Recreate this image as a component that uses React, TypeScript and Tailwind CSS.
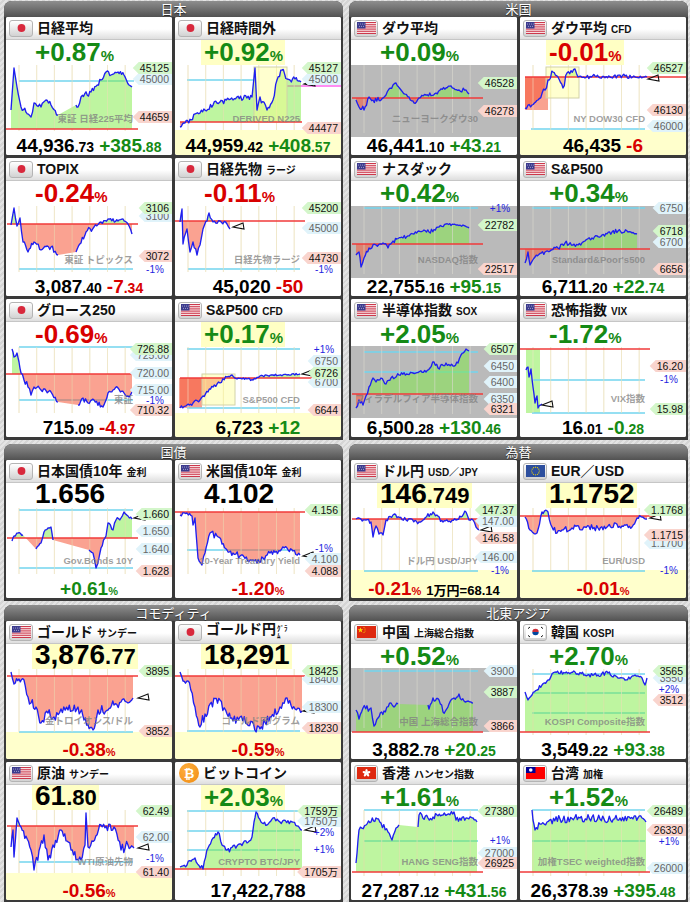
import React from 'react';

type P = [number, number, number?, number?];
type TagK = 'hi' | 'lo' | 'ref';
interface Chart {
  seed: number;
  pts: P[];
  base: number;
  bx?: [number, number];
  gray?: [number, number];
  h?: [number, number, number, string?][];
  tags?: [number, string, TagK][];
  pl?: [number, string][];
  wm?: [string, number, number?];
  mk?: [number, number];
  yr?: [number, number, number, number];
  rr?: [number, number, number, number, 'r' | 'g'][];
  yb?: number;
  nf?: boolean;
}
type FlagK = 'jp' | 'us' | 'eu' | 'cn' | 'kr' | 'hk' | 'tw' | 'btc';
type Top = { k: 'p'; v: string; c: 'g' | 'r'; hl?: boolean } | { k: 'b'; a: string; b?: string; hl?: boolean };
type Bottom =
  | { k: 'v'; a: string; b?: string; c: string; d?: string; col: 'g' | 'r'; y?: boolean }
  | { k: 'p'; v: string; col: 'g' | 'r'; ex?: string; y?: boolean }
  | { k: 'n'; a: string; y?: boolean };
interface CardD { id: string; f: FlagK; t: string; s?: string; top: Top; bot: Bottom; ch: Chart }

const SVGFONT = "'Liberation Sans','Noto Sans CJK JP',sans-serif";
const COL: Record<'g' | 'r', string> = { g: 'text-[#158a15]', r: 'text-[#d80000]' };

function rng(seed: number) {
  let a = seed >>> 0;
  return () => {
    a = (a + 0x6d2b79f5) >>> 0;
    let t = a;
    t = Math.imul(t ^ (t >>> 15), t | 1);
    t ^= t + Math.imul(t ^ (t >>> 7), t | 61);
    return ((t ^ (t >>> 14)) >>> 0) / 4294967296;
  };
}

function gen(ps: P[], r: () => number) {
  const out: { x: number; y: number; m: boolean }[] = [{ x: ps[0][0], y: ps[0][1], m: true }];
  for (let i = 1; i < ps.length; i++) {
    const x0 = ps[i - 1][0];
    const y0 = ps[i - 1][1];
    const x1 = ps[i][0];
    const y1 = ps[i][1];
    const n = ps[i][2] ?? 0;
    const g = ps[i][3] ?? 0;
    if (g) {
      out.push({ x: x1, y: y1, m: true });
      continue;
    }
    const steps = Math.max(1, Math.round((x1 - x0) / 1.3));
    for (let s = 1; s <= steps; s++) {
      const t = s / steps;
      let y = y0 + (y1 - y0) * t;
      if (s < steps && n) y += (r() * 2 - 1) * n;
      y = Math.max(0, Math.min(70, y));
      out.push({ x: x0 + (x1 - x0) * t, y, m: false });
    }
  }
  return out;
}

const tw = (s: string) => [...s].reduce((a, ch) => a + (ch === '.' ? 2.9 : ch === '万' ? 10.5 : 5.85), 0);

function ChartSvg({ c, id }: { c: Chart; id: string }) {
  const W = 166;
  const H = 72;
  const pts = gen(c.pts, rng(c.seed));
  const bx = c.bx ?? [1, 132];
  let line = '';
  pts.forEach((p, i) => {
    line += `${i === 0 || p.m ? 'M' : 'L'}${p.x.toFixed(1)} ${p.y.toFixed(1)} `;
  });
  const f = pts[0];
  const l = pts[pts.length - 1];
  const area =
    `M${f.x} ${c.base} ` + pts.map((p) => `L${p.x.toFixed(1)} ${p.y.toFixed(1)}`).join(' ') + ` L${l.x} ${c.base} Z`;
  const grid = [0, 1, 2, 3, 4, 5, 6].map((i) => 13 + i * 17.7);
  const gy1 = c.yb ?? 66;
  const tags = [...(c.tags ?? [])].sort((a, b) => (a[2] === 'ref' ? 0 : 1) - (b[2] === 'ref' ? 0 : 1));
  const tagFill: Record<TagK, string> = { hi: '#d3f6ca', lo: '#f9d4cd', ref: '#e0f3fa' };
  return (
    <svg width={W} height={H} viewBox={`0 0 ${W} ${H}`} className="block overflow-visible">
      <defs>
        <clipPath id={`${id}u`}>
          <rect x="0" y="-20" width={W} height={c.base + 20} />
        </clipPath>
        <clipPath id={`${id}d`}>
          <rect x="0" y={c.base} width={W} height={H + 20} />
        </clipPath>
      </defs>
      {c.yb !== undefined && <rect x="0" y={c.yb} width={W} height={H - c.yb} fill="#ffffcc" />}
      {c.gray && <rect x="0" y={c.gray[0]} width={W} height={c.gray[1] - c.gray[0]} fill="#bababa" />}
      {!c.gray &&
        grid.map((x) => <line key={`g${x}`} x1={x} x2={x} y1={0} y2={gy1} stroke="#f0e9cf" strokeWidth="1" />)}
      {c.rr?.map((r, i) => (
        <rect key={`r${i}`} x={r[0]} y={r[1]} width={r[2]} height={r[3]} fill={r[4] === 'r' ? '#f9a291' : '#bef5a0'} />
      ))}
      {c.h?.map(([y, x0, x1, col], i) => (
        <line key={`h${i}`} x1={x0} x2={x1} y1={y} y2={y} stroke={col ?? '#72d4ee'} strokeWidth="1.5" />
      ))}
      {!c.nf && (
        <>
          <path d={area} fill="rgba(125,235,65,0.5)" clipPath={`url(#${id}u)`} />
          <path d={area} fill="rgba(245,85,55,0.55)" clipPath={`url(#${id}d)`} />
        </>
      )}
      {grid.map((x) => (
        <line
          key={`v${x}`}
          x1={x}
          x2={x}
          y1={c.gray ? c.gray[0] : 0}
          y2={c.gray ? c.gray[1] - 4 : gy1}
          stroke={c.gray ? '#dcdad0' : '#f0e8c8'}
          strokeOpacity={c.gray ? 0.6 : 0.55}
          strokeWidth="1"
        />
      ))}
      {c.yr && (
        <rect
          x={c.yr[0]}
          y={c.yr[1]}
          width={c.yr[2]}
          height={c.yr[3]}
          fill="#ffff88"
          fillOpacity="0.4"
          stroke="#d2d2a8"
          strokeWidth="1"
        />
      )}
      <line x1={bx[0]} x2={bx[1]} y1={c.base} y2={c.base} stroke="#f03a3a" strokeWidth="1.6" />
      <path d={line} fill="none" stroke="#1f1ff0" strokeWidth="1.35" strokeLinejoin="round" />
      {c.wm && (
        <text
          x={c.wm[2] ?? 127}
          y={c.wm[1]}
          textAnchor="end"
          fontSize="9.5"
          fontWeight="bold"
          fontFamily={SVGFONT}
          fill="#808080"
          fillOpacity="0.75"
        >
          {c.wm[0]}
        </text>
      )}
      {c.mk && (
        <path
          d={`M${c.mk[0]} ${c.mk[1]} L${c.mk[0] + 10} ${c.mk[1] - 4} L${c.mk[0] + 11} ${c.mk[1] + 2} Z`}
          fill="none"
          stroke="#111"
          strokeWidth="1.1"
        />
      )}
      {tags.map(([y, t, k], i) => {
        const x0 = 163 - tw(t);
        const tip = x0 - 7;
        return (
          <g key={`t${i}`}>
            <path
              d={`M${tip} ${y} L${tip + 6} ${y - 6} L${W + 1} ${y - 6} L${W + 1} ${y + 6} L${tip + 6} ${y + 6} Z`}
              fill={tagFill[k]}
            />
            <text x={163} y={y + 3.8} textAnchor="end" fontSize="10.5" fontFamily={SVGFONT} fill={k === 'ref' ? '#666' : '#111'}>
              {t}
            </text>
          </g>
        );
      })}
      {c.pl?.map(([y, t], i) => (
        <text key={`p${i}`} x={149} y={y + 3.5} textAnchor="middle" fontSize="10" fontFamily={SVGFONT} fill="#2424e0">
          {t}
        </text>
      ))}
    </svg>
  );
}

function FlagArt({ k }: { k: FlagK }) {
  if (k === 'jp') return <circle cx="9.5" cy="6" r="3.9" fill="#d8283c" />;
  if (k === 'us')
    return (
      <>
        <rect width="19" height="12" fill="#ffffff" />
        {[0, 2, 4, 6, 8, 10, 12].map((i) => (
          <rect key={i} y={(i * 12) / 13} width="19" height={12 / 13} fill="#c8283c" />
        ))}
        <rect width="8.5" height="6.5" fill="#3c3b8e" />
        {[1.5, 3.5, 5.5, 7.2].map((x) => (
          <circle key={x} cx={x} cy="2" r="0.45" fill="#fff" />
        ))}
        {[2.5, 4.5, 6.5].map((x) => (
          <circle key={x} cx={x} cy="4.3" r="0.45" fill="#fff" />
        ))}
      </>
    );
  if (k === 'eu')
    return (
      <>
        <rect width="19" height="12" fill="#2d4f9e" />
        {Array.from({ length: 12 }).map((_, i) => (
          <circle
            key={i}
            cx={9.5 + 3.8 * Math.cos((i * Math.PI) / 6)}
            cy={6 + 3.8 * Math.sin((i * Math.PI) / 6)}
            r="0.6"
            fill="#f5d800"
          />
        ))}
      </>
    );
  if (k === 'cn')
    return (
      <>
        <rect width="19" height="12" fill="#de2910" />
        <polygon points="3.5,1.2 4.2,3.2 6.3,3.2 4.6,4.4 5.3,6.4 3.5,5.2 1.7,6.4 2.4,4.4 0.7,3.2 2.8,3.2" fill="#ffde00" />
        <circle cx="7" cy="1.5" r="0.5" fill="#ffde00" />
        <circle cx="8" cy="3" r="0.5" fill="#ffde00" />
        <circle cx="8" cy="5" r="0.5" fill="#ffde00" />
        <circle cx="7" cy="6.4" r="0.5" fill="#ffde00" />
      </>
    );
  if (k === 'kr')
    return (
      <>
        <rect width="19" height="12" fill="#ffffff" />
        <path d="M6.3 6 A3.2 3.2 0 0 1 12.7 6 Z" fill="#cd2e3a" />
        <path d="M6.3 6 A3.2 3.2 0 0 0 12.7 6 Z" fill="#0047a0" />
        <line x1="2" y1="2.6" x2="4" y2="1" stroke="#111" strokeWidth="1" />
        <line x1="15" y1="1" x2="17" y2="2.6" stroke="#111" strokeWidth="1" />
        <line x1="2" y1="9.4" x2="4" y2="11" stroke="#111" strokeWidth="1" />
        <line x1="15" y1="11" x2="17" y2="9.4" stroke="#111" strokeWidth="1" />
      </>
    );
  if (k === 'hk')
    return (
      <>
        <rect width="19" height="12" fill="#de2910" />
        {[0, 72, 144, 216, 288].map((a) => (
          <ellipse key={a} cx="9.5" cy="4" rx="1.2" ry="2.1" fill="#ffffff" transform={`rotate(${a} 9.5 6)`} />
        ))}
      </>
    );
  if (k === 'tw')
    return (
      <>
        <rect width="19" height="12" fill="#fe0000" />
        <rect width="9.5" height="6" fill="#000095" />
        <circle cx="4.75" cy="3" r="1.8" fill="#ffffff" />
      </>
    );
  return null;
}

function FlagBox({ k }: { k: FlagK }) {
  if (k === 'btc')
    return (
      <div className="ml-[4px] flex h-[20px] w-[20px] items-center justify-center rounded-full bg-[radial-gradient(circle_at_40%_35%,#ffb040,#f08a10)] text-[13px] leading-none font-bold text-white">
        ₿
      </div>
    );
  return (
    <div className="ml-[3px] flex h-[17px] w-[24px] items-center justify-center rounded-[3px] border border-[#b4b4b4] bg-[linear-gradient(#ffffff,#d2d2d2)]">
      <svg width="19" height="12" viewBox="0 0 19 12">
        <FlagArt k={k} />
      </svg>
    </div>
  );
}

function Card({ d }: { d: CardD }) {
  const top = d.top;
  const bot = d.bot;
  return (
    <div className="flex h-[138px] w-[166px] flex-col overflow-hidden rounded-[2px] bg-white">
      <div className="flex h-[23px] shrink-0 items-center border-b border-[#c6c6c6] bg-[linear-gradient(#ffffff_0%,#ffffff_55%,#dedede_100%)]">
        <FlagBox k={d.f} />
        <div className="ml-[4px] flex items-baseline text-[#111]">
          <span className="text-[14px] leading-none font-bold">{d.t}</span>
          {d.s === 'GRAM' ? (
            <span className="ml-[1px] flex -translate-y-[3px] flex-col text-[7px] leading-[7px] font-bold">
              <span>ｸﾞﾗ</span>
              <span>ﾑ</span>
            </span>
          ) : d.s ? (
            <span className="ml-[4px] text-[10px] leading-none font-bold">{d.s}</span>
          ) : null}
        </div>
      </div>
      <div className="flex h-[25px] shrink-0 pl-[26px]">
        <div className={`flex h-[25px] items-baseline pr-[2px] pl-[3px] ${top.hl ? 'bg-[#ffffc4]' : ''}`}>
          {top.k === 'p' ? (
            <>
              <span className={`text-[26px] leading-[25px] font-bold ${COL[top.c]}`}>{top.v}</span>
              <span className={`text-[15px] font-bold ${COL[top.c]}`}>%</span>
            </>
          ) : (
            <>
              <span className="text-[28px] leading-[22px] font-bold text-black">{top.a}</span>
              {top.b && <span className="text-[22px] leading-[22px] font-bold text-black">{top.b}</span>}
            </>
          )}
        </div>
      </div>
      <div className="h-[72px] shrink-0">
        <ChartSvg c={d.ch} id={d.id} />
      </div>
      <div
        className={`flex h-[18px] shrink-0 items-baseline justify-center leading-[18px] font-bold ${bot.y ? 'bg-[#ffffcc]' : 'bg-white'}`}
      >
        {bot.k === 'v' && (
          <>
            <span className="text-[19px] text-black">{bot.a}</span>
            {bot.b && <span className="text-[14px] text-black">{bot.b}</span>}
            <span className={`ml-[5px] text-[19px] ${COL[bot.col]}`}>{bot.c}</span>
            {bot.d && <span className={`text-[14px] ${COL[bot.col]}`}>{bot.d}</span>}
          </>
        )}
        {bot.k === 'p' && (
          <>
            <span className={`text-[19px] ${COL[bot.col]}`}>{bot.v}</span>
            <span className={`text-[11px] ${COL[bot.col]}`}>%</span>
            {bot.ex && <span className="ml-[5px] text-[13px] text-black">{bot.ex}</span>}
          </>
        )}
        {bot.k === 'n' && <span className="text-[19px] text-black">{bot.a}</span>}
      </div>
    </div>
  );
}

function Section({ title, cards }: { title: string; cards: CardD[] }) {
  return (
    <div className="w-[339px] overflow-hidden rounded-t-[8px] bg-[#3a3a3a] px-[2px] pb-[3px]">
      <div className="-mx-[2px] flex h-[16px] items-center justify-center bg-[linear-gradient(#8e8e8e,#525252)] text-[13px] leading-none text-white [text-shadow:0_1px_1px_#222]">
        {title}
      </div>
      <div className="grid grid-cols-[166px_166px] gap-[3px]">
        {cards.map((c) => (
          <Card key={c.id} d={c} />
        ))}
      </div>
    </div>
  );
}

const c1: CardD = {
  id: 'c1', f: 'jp', t: '日経平均',
  top: { k: 'p', v: '+0.87', c: 'g' },
  bot: { k: 'v', a: '44,936', b: '.73', c: '+385', d: '.88', col: 'g' },
  ch: {
    seed: 11, base: 64, bx: [0, 132],
    pts: [[5, 45], [8, 3, 2], [11, 22, 2], [15, 42, 3], [25, 52, 3], [28, 38, 3], [35, 42, 3], [40, 35, 3], [45, 40, 3], [52, 50, 3], [70, 40, 0, 1], [72, 42, 2], [75, 32, 3], [85, 27, 3], [95, 15, 3], [100, 7, 2], [105, 10, 2], [112, 7, 2], [118, 10, 2], [123, 20, 1], [126, 22, 1]],
    h: [[16, 13, 128]],
    tags: [[14, '45000', 'ref'], [3, '45125', 'hi'], [52, '44659', 'lo']],
    wm: ['東証 日経225平均', 57],
  },
};
const c2: CardD = {
  id: 'c2', f: 'jp', t: '日経時間外',
  top: { k: 'p', v: '+0.92', c: 'g', hl: true },
  bot: { k: 'v', a: '44,959', b: '.42', c: '+408', d: '.57', col: 'g', y: true },
  ch: {
    seed: 22, base: 57, bx: [5, 127], yb: 65,
    pts: [[5, 62], [10, 58, 2], [25, 48, 3], [42, 38, 3], [58, 35, 3], [77, 32, 3], [80, 3, 1], [82, 45, 1], [85, 32, 4], [92, 45, 4], [98, 35, 4], [102, 15, 3], [107, 5, 3], [112, 14, 3], [115, 15, 3], [120, 14, 3], [126, 17, 2]],
    h: [[15, 12, 80], [21, 112, 166, '#ff66ee']],
    yr: [79, 2, 33, 55],
    tags: [[14, '45000', 'ref'], [3, '45127', 'hi'], [63, '44477', 'lo']],
    mk: [129, 19], wm: ['DERIVED N225', 57, 125],
  },
};
const c3: CardD = {
  id: 'c3', f: 'us', t: 'ダウ平均',
  top: { k: 'p', v: '+0.09', c: 'g' },
  bot: { k: 'v', a: '46,441', b: '.10', c: '+43', d: '.21', col: 'g' },
  ch: {
    seed: 33, base: 33, gray: [0, 72],
    pts: [[5, 35], [8, 42, 2], [13, 45, 3], [18, 32, 3], [22, 35, 3], [32, 33, 3], [35, 30, 2], [42, 20, 2], [45, 18, 1], [50, 25, 2], [58, 32, 2], [63, 38, 2], [68, 33, 2], [75, 30, 2], [85, 28, 2], [95, 23, 2], [100, 21, 2], [108, 25, 2], [115, 25, 2], [118, 29, 1]],
    tags: [[18, '46528', 'hi'], [46, '46278', 'lo']],
    wm: ['ニューヨークダウ30', 57],
  },
};
const c4: CardD = {
  id: 'c4', f: 'us', t: 'ダウ平均', s: 'CFD',
  top: { k: 'p', v: '-0.01', c: 'r', hl: true },
  bot: { k: 'v', a: '46,435', c: '-6', col: 'r', y: true },
  ch: {
    seed: 44, base: 12, bx: [5, 167], yb: 65,
    rr: [[5, 12, 23, 33, 'r']],
    pts: [[5, 43], [12, 40, 2], [18, 35, 2], [25, 25, 3], [28, 15, 3], [33, 7, 3], [38, 12, 3], [43, 23, 3], [47, 8, 3], [55, 4, 2], [58, 12, 2], [65, 13, 2], [75, 11, 2], [90, 12, 2], [105, 11, 2], [115, 12, 2], [127, 12, 1]],
    yr: [26, 2, 33, 31],
    h: [[64, 11, 125]],
    tags: [[61, '46000', 'ref'], [3, '46527', 'hi'], [45, '46130', 'lo']],
    mk: [128, 14], wm: ['NY DOW30 CFD', 57, 125],
  },
};
const c5: CardD = {
  id: 'c5', f: 'jp', t: 'TOPIX',
  top: { k: 'p', v: '-0.24', c: 'r' },
  bot: { k: 'v', a: '3,087', b: '.40', c: '-7', d: '.34', col: 'r' },
  ch: {
    seed: 55, base: 18,
    pts: [[5, 19], [8, 2, 2], [11, 20, 2], [14, 12, 2], [17, 36, 3], [22, 46, 3], [28, 36, 3], [35, 44, 3], [45, 41, 3], [52, 49, 3], [70, 46, 0, 1], [75, 37, 2], [80, 26, 3], [88, 21, 3], [95, 16, 2], [102, 13, 2], [112, 15, 2], [117, 13, 2], [122, 18, 1], [126, 28, 1]],
    h: [[63, 13, 127]], pl: [[63, '-1%']],
    tags: [[10, '3100', 'ref'], [2, '3106', 'hi'], [50, '3072', 'lo']],
    wm: ['東証 トピックス', 57],
  },
};
const c6: CardD = {
  id: 'c6', f: 'jp', t: '日経先物', s: 'ラージ',
  top: { k: 'p', v: '-0.11', c: 'r' },
  bot: { k: 'v', a: '45,020', c: '-50', col: 'r' },
  ch: {
    seed: 66, base: 15, bx: [0, 130],
    pts: [[5, 16], [7, 3, 1], [8, 38, 1], [12, 23, 2], [15, 46, 2], [18, 36, 2], [22, 49, 2], [25, 39, 2], [28, 23, 2], [32, 15, 2], [34, 7, 1], [38, 16, 2], [45, 15, 2], [52, 18, 2], [55, 23, 1]],
    h: [[63, 13, 125]], pl: [[63, '-1%']],
    tags: [[22, '45000', 'ref'], [2, '45200', 'hi'], [52, '44730', 'lo']],
    mk: [58, 21], wm: ['日経先物ラージ', 57, 125],
  },
};
const c7: CardD = {
  id: 'c7', f: 'us', t: 'ナスダック',
  top: { k: 'p', v: '+0.42', c: 'g' },
  bot: { k: 'v', a: '22,755', b: '.16', c: '+95', d: '.15', col: 'g' },
  ch: {
    seed: 77, base: 38, gray: [0, 72],
    pts: [[5, 49], [8, 46, 2], [10, 61, 2], [13, 52, 2], [18, 42, 2], [25, 39, 2], [32, 37, 2], [37, 42, 2], [42, 35, 2], [52, 32, 2], [62, 28, 2], [68, 25, 2], [78, 26, 2], [88, 21, 2], [95, 18, 2], [105, 19, 2], [112, 19, 2], [118, 22, 1]],
    h: [[2, 13, 127]], pl: [[2, '+1%']],
    tags: [[19, '22782', 'hi'], [63, '22517', 'lo']],
    wm: ['NASDAQ指数', 57],
  },
};
const c8: CardD = {
  id: 'c8', f: 'us', t: 'S&P500',
  top: { k: 'p', v: '+0.34', c: 'g' },
  bot: { k: 'v', a: '6,711', b: '.20', c: '+22', d: '.74', col: 'g' },
  ch: {
    seed: 88, base: 43, bx: [0, 130], gray: [0, 72],
    pts: [[5, 57], [8, 46, 2], [10, 59, 2], [15, 51, 2], [25, 46, 2], [38, 42, 2], [45, 37, 2], [58, 39, 2], [65, 35, 2], [72, 32, 2], [82, 29, 2], [92, 26, 2], [98, 25, 2], [108, 26, 2], [117, 28, 1]],
    h: [[2, 12, 125]],
    tags: [[2, '6750', 'ref'], [36, '6700', 'ref'], [25, '6718', 'hi'], [63, '6656', 'lo']],
    wm: ["Standard&Poor's500", 57, 125],
  },
};
const c9: CardD = {
  id: 'c9', f: 'jp', t: 'グロース250',
  top: { k: 'p', v: '-0.69', c: 'r' },
  bot: { k: 'v', a: '715', b: '.09', c: '-4', d: '.97', col: 'r' },
  ch: {
    seed: 99, base: 27, bx: [0, 132],
    pts: [[6, 2], [8, 10, 2], [11, 6, 2], [13, 15, 2], [15, 26, 2], [18, 33, 2], [22, 40, 3], [25, 48, 3], [28, 40, 3], [35, 43, 3], [45, 45, 3], [52, 55, 3], [72, 58, 0, 1], [77, 51, 2], [82, 56, 3], [88, 53, 3], [97, 60, 3], [102, 46, 3], [107, 43, 2], [112, 41, 2], [118, 46, 2], [123, 50, 2], [126, 45, 1]],
    h: [[0, 13, 127], [53, 13, 127]], pl: [[53, '-1%']],
    tags: [[8, '725.00', 'ref'], [26, '720.00', 'ref'], [43, '715.00', 'ref'], [2, '726.88', 'hi'], [63, '710.32', 'lo']],
    wm: ['東証', 56],
  },
};
const c10: CardD = {
  id: 'c10', f: 'us', t: 'S&P500', s: 'CFD',
  top: { k: 'p', v: '+0.17', c: 'g', hl: true },
  bot: { k: 'v', a: '6,723', c: '+12', col: 'g', y: true },
  ch: {
    seed: 101, base: 31, bx: [5, 166], yb: 66,
    rr: [[4, 31, 23, 30, 'r']],
    pts: [[5, 61], [12, 58, 2], [18, 56, 2], [25, 53, 2], [28, 49, 2], [33, 45, 2], [38, 40, 2], [45, 36, 2], [52, 30, 2], [57, 28, 1], [62, 32, 1], [72, 32, 1], [78, 33, 1], [85, 29, 1], [98, 28, 1], [112, 28, 1], [125, 27, 1]],
    yr: [27, 27, 33, 31],
    h: [[2, 12, 125], [61, 12, 125]], pl: [[2, '+1%']],
    tags: [[14, '6750', 'ref'], [35, '6700', 'ref'], [26, '6726', 'hi'], [63, '6644', 'lo']],
    mk: [127, 27], wm: ['S&P500 CFD', 56, 125],
  },
};
const c11: CardD = {
  id: 'c11', f: 'us', t: '半導体指数', s: 'SOX',
  top: { k: 'p', v: '+2.05', c: 'g' },
  bot: { k: 'v', a: '6,500', b: '.28', c: '+130', d: '.46', col: 'g' },
  ch: {
    seed: 111, base: 47, gray: [-1, 71],
    pts: [[5, 61], [8, 53, 2], [12, 58, 2], [15, 49, 2], [18, 40, 2], [22, 31, 2], [25, 35, 2], [30, 31, 2], [35, 37, 2], [40, 31, 2], [48, 28, 2], [62, 26, 2], [75, 25, 2], [83, 15, 2], [87, 21, 2], [95, 16, 2], [102, 19, 2], [107, 16, 2], [110, 8, 1], [115, 2, 1], [118, 4, 1]],
    h: [[5, 13, 127], [25, 13, 127]],
    tags: [[19, '6450', 'ref'], [35, '6400', 'ref'], [52, '6350', 'ref'], [2, '6507', 'hi'], [62, '6321', 'lo']],
    wm: ['フィラデルフィア半導体指数', 55],
  },
};
const c12: CardD = {
  id: 'c12', f: 'us', t: '恐怖指数', s: 'VIX',
  top: { k: 'p', v: '-1.72', c: 'g' },
  bot: { k: 'v', a: '16', b: '.01', c: '-0', d: '.28', col: 'g' },
  ch: {
    seed: 121, base: 2, bx: [0, 130], nf: true,
    rr: [[6, 2, 14, 64, 'g']],
    pts: [[6, 23], [8, 20, 1], [9, 30, 1], [11, 22, 1], [13, 40, 2], [15, 56, 2], [17, 49, 2], [18, 61, 1], [22, 57, 1]],
    h: [[33, 13, 125], [66, 12, 125]], pl: [[32, '-1%']],
    tags: [[19, '16.20', 'lo'], [62, '15.98', 'hi']],
    mk: [22, 58], wm: ['VIX指数', 55, 125],
  },
};
const c13: CardD = {
  id: 'c13', f: 'jp', t: '日本国債10年', s: '金利',
  top: { k: 'b', a: '1.656' },
  bot: { k: 'p', v: '+0.61', col: 'g' },
  ch: {
    seed: 131, base: 30,
    pts: [[6, 33], [8, 28, 1], [12, 25, 1], [17, 27, 1], [30, 41, 0, 1], [35, 35, 1], [38, 24, 1], [42, 20, 1], [45, 19, 1], [47, 32, 1], [83, 42, 0, 1], [87, 45, 1], [90, 60, 1], [92, 55, 1], [95, 40, 1], [100, 28, 2], [102, 15, 2], [107, 22, 2], [110, 12, 2], [115, 10, 2], [118, 4, 1], [122, 8, 1], [126, 11, 1]],
    h: [[2, 13, 127], [60, 13, 127]],
    tags: [[23, '1.650', 'ref'], [41, '1.640', 'ref'], [6, '1.660', 'hi'], [63, '1.628', 'lo']],
    mk: [128, 10], wm: ['Gov.Bonds 10Y', 56],
  },
};
const c14: CardD = {
  id: 'c14', f: 'us', t: '米国債10年', s: '金利',
  top: { k: 'b', a: '4.102' },
  bot: { k: 'p', v: '-1.20', col: 'r' },
  ch: {
    seed: 141, base: 4, bx: [0, 130],
    pts: [[5, 7], [12, 5, 2], [17, 8, 2], [18, 17, 1], [20, 10, 1], [22, 37, 2], [23, 50, 2], [27, 57, 2], [30, 45, 3], [35, 25, 3], [42, 28, 3], [47, 36, 3], [52, 42, 3], [58, 45, 3], [65, 48, 3], [75, 52, 3], [82, 55, 3], [88, 50, 3], [95, 45, 3], [105, 43, 3], [112, 40, 3], [118, 43, 3], [125, 47, 2]],
    h: [[42, 12, 125]], pl: [[40, '-1%']],
    tags: [[51, '4.100', 'ref'], [2, '4.156', 'hi'], [63, '4.088', 'lo']],
    mk: [128, 48], wm: ['10-Year Treasury Yield', 56, 125],
  },
};
const c15: CardD = {
  id: 'c15', f: 'us', t: 'ドル円', s: 'USD／JPY',
  top: { k: 'b', a: '146', b: '.749', hl: true },
  bot: { k: 'p', v: '-0.21', col: 'r', ex: '1万円=68.14', y: true },
  ch: {
    seed: 151, base: 11, yb: 62,
    pts: [[5, 11], [15, 12, 2], [20, 14, 2], [22, 29, 3], [25, 18, 3], [28, 26, 3], [32, 27, 3], [35, 12, 3], [42, 7, 2], [55, 12, 2], [68, 14, 2], [82, 4, 2], [92, 14, 2], [105, 12, 2], [115, 4, 2], [118, 12, 2], [122, 12, 2], [125, 19, 2], [128, 22, 1]],
    h: [[63, 13, 127]], pl: [[62, '-1%']],
    tags: [[13, '147.00', 'ref'], [49, '146.00', 'ref'], [2, '147.37', 'hi'], [30, '146.58', 'lo']],
    mk: [130, 22], wm: ['ドル円 USD/JPY', 56],
  },
};
const c16: CardD = {
  id: 'c16', f: 'eu', t: 'EUR／USD',
  top: { k: 'b', a: '1.1752', hl: true },
  bot: { k: 'p', v: '-0.01', col: 'r', y: true },
  ch: {
    seed: 161, base: 8, bx: [0, 135], yb: 62,
    pts: [[5, 9], [10, 22, 3], [17, 25, 3], [22, 4, 2], [28, 4, 2], [32, 19, 3], [37, 25, 3], [42, 22, 3], [52, 20, 3], [65, 19, 3], [78, 20, 3], [88, 18, 3], [102, 18, 3], [112, 19, 2], [117, 10, 2], [122, 9, 2], [127, 11, 1]],
    h: [[63, 12, 125]], pl: [[62, '-1%']],
    tags: [[35, '1.1700', 'ref'], [2, '1.1768', 'hi'], [27, '1.1715', 'lo']],
    mk: [130, 10], wm: ['EUR/USD', 56, 125],
  },
};
const c17: CardD = {
  id: 'c17', f: 'us', t: 'ゴールド', s: 'サンデー',
  top: { k: 'b', a: '3,876', b: '.77', hl: true },
  bot: { k: 'p', v: '-0.38', col: 'r', y: true },
  ch: {
    seed: 171, base: 7, yb: 63,
    pts: [[5, 3], [8, 15, 3], [13, 10, 3], [18, 11, 3], [22, 28, 4], [25, 34, 4], [30, 38, 5], [35, 54, 5], [42, 44, 5], [48, 48, 5], [55, 40, 5], [62, 41, 5], [72, 38, 5], [78, 51, 5], [87, 61, 4], [92, 41, 4], [102, 41, 5], [108, 36, 5], [115, 33, 5], [122, 34, 4], [127, 29, 2]],
    h: [[63, 13, 127]],
    tags: [[2, '3895', 'hi'], [62, '3852', 'lo']],
    mk: [132, 29], wm: ['金トロイオンス/ドル', 55],
  },
};
const c18: CardD = {
  id: 'c18', f: 'jp', t: 'ゴールド円', s: 'GRAM',
  top: { k: 'b', a: '18,291', hl: true },
  bot: { k: 'p', v: '-0.59', col: 'r', y: true },
  ch: {
    seed: 181, base: 7, bx: [0, 130], yb: 63,
    pts: [[5, 3], [8, 12, 3], [13, 12, 3], [20, 38, 4], [25, 58, 4], [30, 45, 5], [35, 35, 5], [45, 31, 5], [52, 45, 5], [58, 52, 5], [65, 48, 5], [72, 55, 5], [85, 60, 5], [95, 48, 5], [105, 38, 5], [112, 29, 4], [120, 40, 4], [127, 42, 2]],
    h: [[62, 12, 125]],
    tags: [[10, '18400', 'ref'], [38, '18300', 'ref'], [2, '18425', 'hi'], [59, '18230', 'lo']],
    mk: [128, 42], wm: ['ゴールド円/グラム', 55, 125],
  },
};
const c19: CardD = {
  id: 'c19', f: 'us', t: '原油', s: 'サンデー',
  top: { k: 'b', a: '61', b: '.80', hl: true },
  bot: { k: 'p', v: '-0.56', col: 'r', y: true },
  ch: {
    seed: 191, base: 16, yb: 63,
    pts: [[5, 37], [7, 20, 2], [8, 47, 2], [11, 8, 2], [15, 17, 4], [25, 40, 5], [28, 60, 4], [38, 25, 5], [42, 50, 5], [52, 27, 5], [55, 20, 4], [65, 40, 5], [75, 50, 5], [79, 35, 3], [80, 3, 1], [82, 37, 1], [95, 15, 5], [108, 17, 5], [115, 40, 5], [122, 35, 5], [128, 38, 3]],
    h: [[52, 13, 127]], pl: [[48, '-1%']],
    tags: [[27, '62.00', 'ref'], [1, '62.49', 'hi'], [62, '61.40', 'lo']],
    mk: [132, 38], wm: ['WTI原油先物', 55],
  },
};
const c20: CardD = {
  id: 'c20', f: 'btc', t: 'ビットコイン',
  top: { k: 'p', v: '+2.03', c: 'g', hl: true },
  bot: { k: 'n', a: '17,422,788' },
  ch: {
    seed: 201, base: 59, bx: [0, 130],
    pts: [[5, 57], [12, 55, 2], [20, 48, 3], [28, 59, 3], [33, 38, 3], [38, 28, 3], [43, 22, 2], [47, 35, 3], [52, 40, 2], [62, 36, 3], [72, 33, 3], [77, 27, 2], [79, 12, 1], [81, 2, 1], [86, 12, 2], [92, 15, 2], [98, 8, 2], [105, 12, 2], [117, 12, 2], [122, 16, 2], [127, 20, 1]],
    h: [[1, 12, 125], [21, 12, 125], [40, 12, 125]], pl: [[22, '+2%'], [39, '+1%']],
    tags: [[11, '1750万', 'ref'], [1, '1759万', 'hi'], [62, '1705万', 'lo']],
    mk: [130, 20], wm: ['CRYPTO BTC/JPY', 55, 125],
  },
};
const c21: CardD = {
  id: 'c21', f: 'cn', t: '中国', s: '上海総合指数',
  top: { k: 'p', v: '+0.52', c: 'g' },
  bot: { k: 'v', a: '3,882', b: '.78', c: '+20', d: '.25', col: 'g' },
  ch: {
    seed: 211, base: 63, gray: [-1, 63],
    pts: [[5, 41], [8, 50, 3], [12, 39, 3], [20, 39, 4], [23, 57, 3], [27, 49, 3], [33, 42, 3], [40, 34, 3], [43, 38, 2], [47, 35, 2], [77, 36, 0, 1], [78, 40, 1], [82, 29, 3], [88, 31, 3], [92, 43, 3], [98, 35, 3], [103, 29, 3], [108, 25, 3], [113, 32, 3], [120, 33, 2], [122, 34, 1]],
    h: [[2, 13, 127]],
    tags: [[2, '3900', 'ref'], [23, '3887', 'hi'], [57, '3866', 'lo']],
    wm: ['中国 上海総合指数', 56],
  },
};
const c22: CardD = {
  id: 'c22', f: 'kr', t: '韓国', s: 'KOSPI',
  top: { k: 'p', v: '+2.70', c: 'g' },
  bot: { k: 'v', a: '3,549', b: '.22', c: '+93', d: '.38', col: 'g' },
  ch: {
    seed: 221, base: 63, bx: [0, 130],
    pts: [[5, 23], [8, 31, 2], [12, 26, 2], [17, 21, 2], [22, 16, 2], [28, 11, 2], [35, 3, 2], [45, 4, 2], [55, 3, 2], [65, 6, 2], [78, 6, 2], [88, 4, 2], [98, 9, 2], [105, 11, 2], [115, 6, 2], [122, 9, 2], [125, 16, 1], [127, 9, 1]],
    h: [[5, 12, 125], [24, 12, 125], [44, 12, 125]], pl: [[20, '+2%']],
    tags: [[9, '3550', 'ref'], [2, '3565', 'hi'], [31, '3512', 'lo']],
    wm: ['KOSPI Composite指数', 56, 125],
  },
};
const c23: CardD = {
  id: 'c23', f: 'hk', t: '香港', s: 'ハンセン指数',
  top: { k: 'p', v: '+1.61', c: 'g' },
  bot: { k: 'v', a: '27,287', b: '.12', c: '+431', d: '.56', col: 'g' },
  ch: {
    seed: 231, base: 62,
    pts: [[5, 53], [7, 30, 2], [8, 20, 2], [15, 15, 3], [20, 12, 3], [25, 8, 3], [30, 13, 3], [37, 22, 3], [41, 30, 3], [45, 18, 3], [48, 15, 2], [67, 17, 0, 1], [68, 5, 1], [77, 8, 3], [92, 5, 3], [103, 2, 3], [105, 10, 2], [115, 8, 3], [122, 8, 2], [126, 12, 1]],
    h: [[0, 13, 127], [31, 13, 127]], pl: [[30, '+1%']],
    tags: [[43, '27000', 'ref'], [1, '27380', 'hi'], [53, '26925', 'lo']],
    wm: ['HANG SENG指数', 55],
  },
};
const c24: CardD = {
  id: 'c24', f: 'tw', t: '台湾', s: '加権',
  top: { k: 'p', v: '+1.52', c: 'g' },
  bot: { k: 'v', a: '26,378', b: '.39', c: '+395', d: '.48', col: 'g' },
  ch: {
    seed: 241, base: 62, bx: [0, 130],
    pts: [[12, 0], [13, 10, 1], [15, 20, 1], [20, 14, 3], [27, 12, 4], [40, 9, 4], [60, 8, 4], [80, 9, 4], [100, 8, 4], [122, 8, 3], [126, 12, 1]],
    h: [[0, 12, 125], [31, 12, 125]], pl: [[31, '+1%']],
    tags: [[58, '26000', 'ref'], [1, '26489', 'hi'], [20, '26330', 'lo']],
    wm: ['加権TSEC weighted指数', 55, 125],
  },
};

export default function App() {
  return (
    <div className="h-[902px] w-[690px] overflow-hidden bg-[repeating-linear-gradient(135deg,#e4e4e4_0px,#e4e4e4_2px,#d5d5d5_2px,#d5d5d5_4px)] font-[family-name:'Liberation_Sans','Noto_Sans_CJK_JP',sans-serif]">
      <div className="flex gap-[6px] pt-[1px] pl-[4px]">
        <div className="flex flex-col gap-[4px]">
          <Section title="日本" cards={[c1, c2, c5, c6, c9, c10]} />
          <Section title="国債" cards={[c13, c14]} />
          <Section title="コモディティ" cards={[c17, c18, c19, c20]} />
        </div>
        <div className="flex flex-col gap-[4px]">
          <Section title="米国" cards={[c3, c4, c7, c8, c11, c12]} />
          <Section title="為替" cards={[c15, c16]} />
          <Section title="北東アジア" cards={[c21, c22, c23, c24]} />
        </div>
      </div>
    </div>
  );
}
